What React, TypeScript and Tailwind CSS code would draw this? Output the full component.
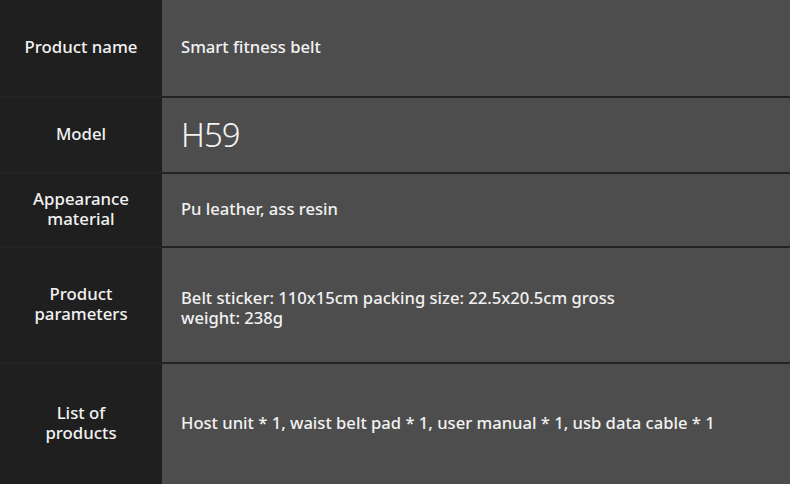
const rows = [
  { label: "Product name", value: "Smart fitness belt", h: "h-[98px]" },
  { label: "Model", value: "H59", h: "h-[76px]", big: true },
  { label: "Appearance material", value: "Pu leather, ass resin", h: "h-[74px]", wrap: true },
  {
    label: "Product parameters",
    value: "Belt sticker: 110x15cm packing size: 22.5x20.5cm gross weight: 238g",
    h: "h-[116px]",
    wrap: true,
    narrow: true,
  },
  {
    label: "List of products",
    value: "Host unit * 1, waist belt pad * 1, user manual * 1, usb data cable * 1",
    h: "flex-1",
    wrap: true,
    last: true,
  },
];

export default function App() {
  return (
    <div
      className="flex h-[484px] w-[790px] flex-col bg-[#4d4d4d] text-[#f2f2f2]"
      style={{ fontFamily: '"Noto Sans", "Open Sans", sans-serif' }}
    >
      {rows.map((r, i) => (
        <div
          key={i}
          className={`flex shrink-0 ${r.h} ${r.last ? "" : "border-b-2 border-[#222222]"}`}
        >
          <div className="flex w-[162px] shrink-0 items-center justify-center bg-[#1f1f1f] pb-[2px] text-center text-[16.8px] font-medium leading-[20px]">
            <p className={r.wrap ? "w-[104px]" : ""}>{r.label}</p>
          </div>
          <div
            className={`flex flex-1 items-center pl-[19px] ${r.narrow ? "pt-[5px]" : "pb-[2px]"}`}
          >
            {r.big ? (
              <div className="text-[33px] font-light leading-none tracking-[-1px]">{r.value}</div>
            ) : (
              <div
                className={`text-[16.6px] font-medium leading-[20px] ${r.narrow ? "w-[470px]" : ""}`}
              >
                {r.value}
              </div>
            )}
          </div>
        </div>
      ))}
    </div>
  );
}
